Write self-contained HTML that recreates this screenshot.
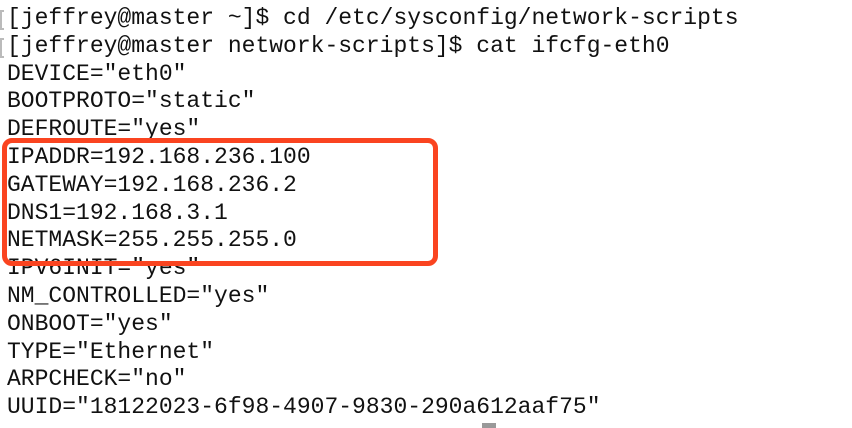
<!DOCTYPE html>
<html><head><meta charset="utf-8"><style>
html,body{margin:0;padding:0;background:#fff;width:852px;height:428px;overflow:hidden;position:relative}
pre{margin:0;position:absolute;left:7px;top:5px;font-family:"Liberation Mono",monospace;font-size:23px;line-height:27.8px;color:#111;letter-spacing:0px}
.g{position:absolute;left:0;width:4px;height:20px;border-left:2px solid #bbb;border-top:2px solid #bbb;border-bottom:2px solid #bbb;box-sizing:border-box}
.box{position:absolute;left:2px;top:138px;width:436px;height:128px;border:5px solid #fa4420;border-radius:10px;box-sizing:border-box}
.cur{position:absolute;left:482px;top:423px;width:14px;height:5px;background:#999}
</style></head><body>
<div class="g" style="top:10px"></div>
<div class="g" style="top:38px"></div>
<pre>[jeffrey@master ~]$ cd /etc/sysconfig/network-scripts
[jeffrey@master network-scripts]$ cat ifcfg-eth0
DEVICE="eth0"
BOOTPROTO="static"
DEFROUTE="yes"
IPADDR=192.168.236.100
GATEWAY=192.168.236.2
DNS1=192.168.3.1
NETMASK=255.255.255.0
IPV6INIT="yes"
NM_CONTROLLED="yes"
ONBOOT="yes"
TYPE="Ethernet"
ARPCHECK="no"
UUID="18122023-6f98-4907-9830-290a612aaf75"</pre>
<div class="box"></div>
<div class="cur"></div>
</body></html>
